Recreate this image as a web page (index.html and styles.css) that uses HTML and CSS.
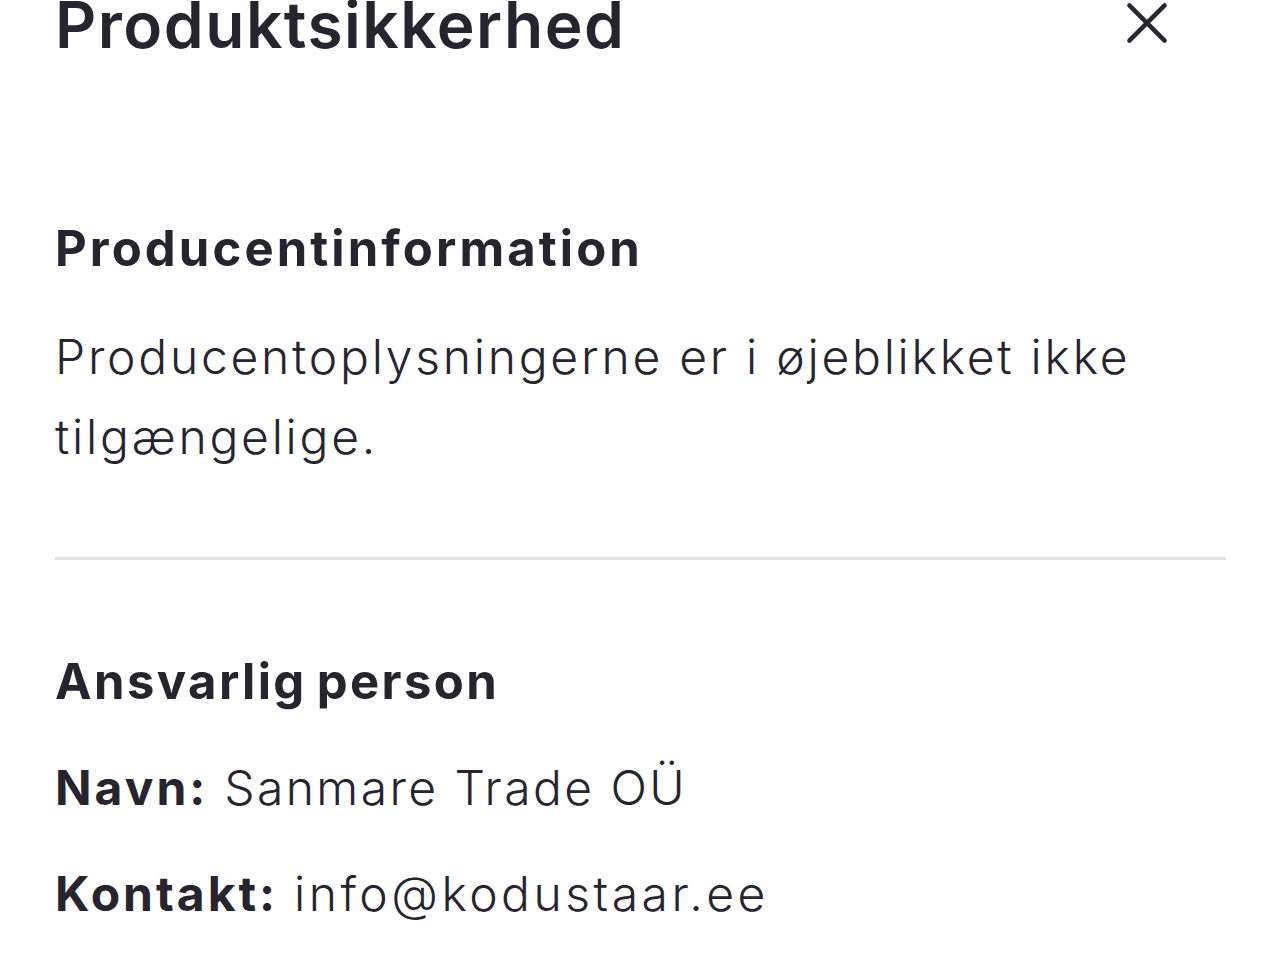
FILE: index.html
```html
<!DOCTYPE html>
<html lang="da">
<head>
<meta charset="utf-8">
<title>Produktsikkerhed</title>
<link rel="stylesheet" href="styles.css">
</head>
<body>
<div class="sheet">
  <header class="sheet-head">
    <h1 class="sheet-title">Produktsikkerhed</h1>
    <button class="close" aria-label="Luk">
      <svg viewBox="0 0 40 40" width="44" height="44"><path d="M4 4 L36 36 M36 4 L4 36" stroke="#27252f" stroke-width="4" stroke-linecap="round" fill="none"/></svg>
    </button>
  </header>
  <section class="block">
    <h2 class="block-title">Producentinformation</h2>
    <p class="text">Producentoplysningerne er i øjeblikket ikke tilgængelige.</p>
  </section>
  <hr class="divider">
  <section class="block">
    <h2 class="block-title block-title-short">Ansvarlig person</h2>
    <p class="row"><strong>Navn:</strong> Sanmare Trade OÜ</p>
    <p class="row"><strong>Kontakt:</strong> <span class="email">info@kodustaar.ee</span></p>
  </section>
</div>
</body>
</html>
```
FILE: styles.css
```css
html, body {
  margin: 0;
  padding: 0;
  background: #ffffff;
}
body {
  font-family: Inter, "Noto Sans", sans-serif;
  color: #26242f;
}
.sheet {
  padding: 0 54px 0 55px;
}
.sheet-head {
  display: flex;
  justify-content: space-between;
  align-items: flex-start;
  margin-top: -7px;
}
.sheet-title {
  margin: 0;
  font-size: 64px;
  line-height: 64px;
  font-weight: 600;
  letter-spacing: 1.5px;
}
.close {
  background: none;
  border: 0;
  padding: 0;
  margin: 8px 57px 0 0;
  display: flex;
}
.block-title {
  margin: 0;
  font-size: 49px;
  font-weight: 700;
  line-height: 80px;
  letter-spacing: 3.1px;
  word-spacing: -4px;
}
.block-title-short {
  letter-spacing: 2.4px;
}
.sheet-head + .block {
  margin-top: 152px;
}
.text {
  margin: 28px 0 0;
  font-size: 48px;
  font-weight: 300;
  line-height: 80px;
  letter-spacing: 2.75px;
}
.divider {
  border: 0;
  height: 3px;
  background: #e2e2e4;
  margin: 80px 0 0;
}
.divider + .block {
  margin-top: 82px;
}
.row {
  margin: 26px 0 0;
  font-size: 48px;
  font-weight: 300;
  line-height: 80px;
  letter-spacing: 2.4px;
}
.row strong {
  font-weight: 700;
  letter-spacing: 3px;
}
.row .email {
  letter-spacing: 3.5px;
}
```
